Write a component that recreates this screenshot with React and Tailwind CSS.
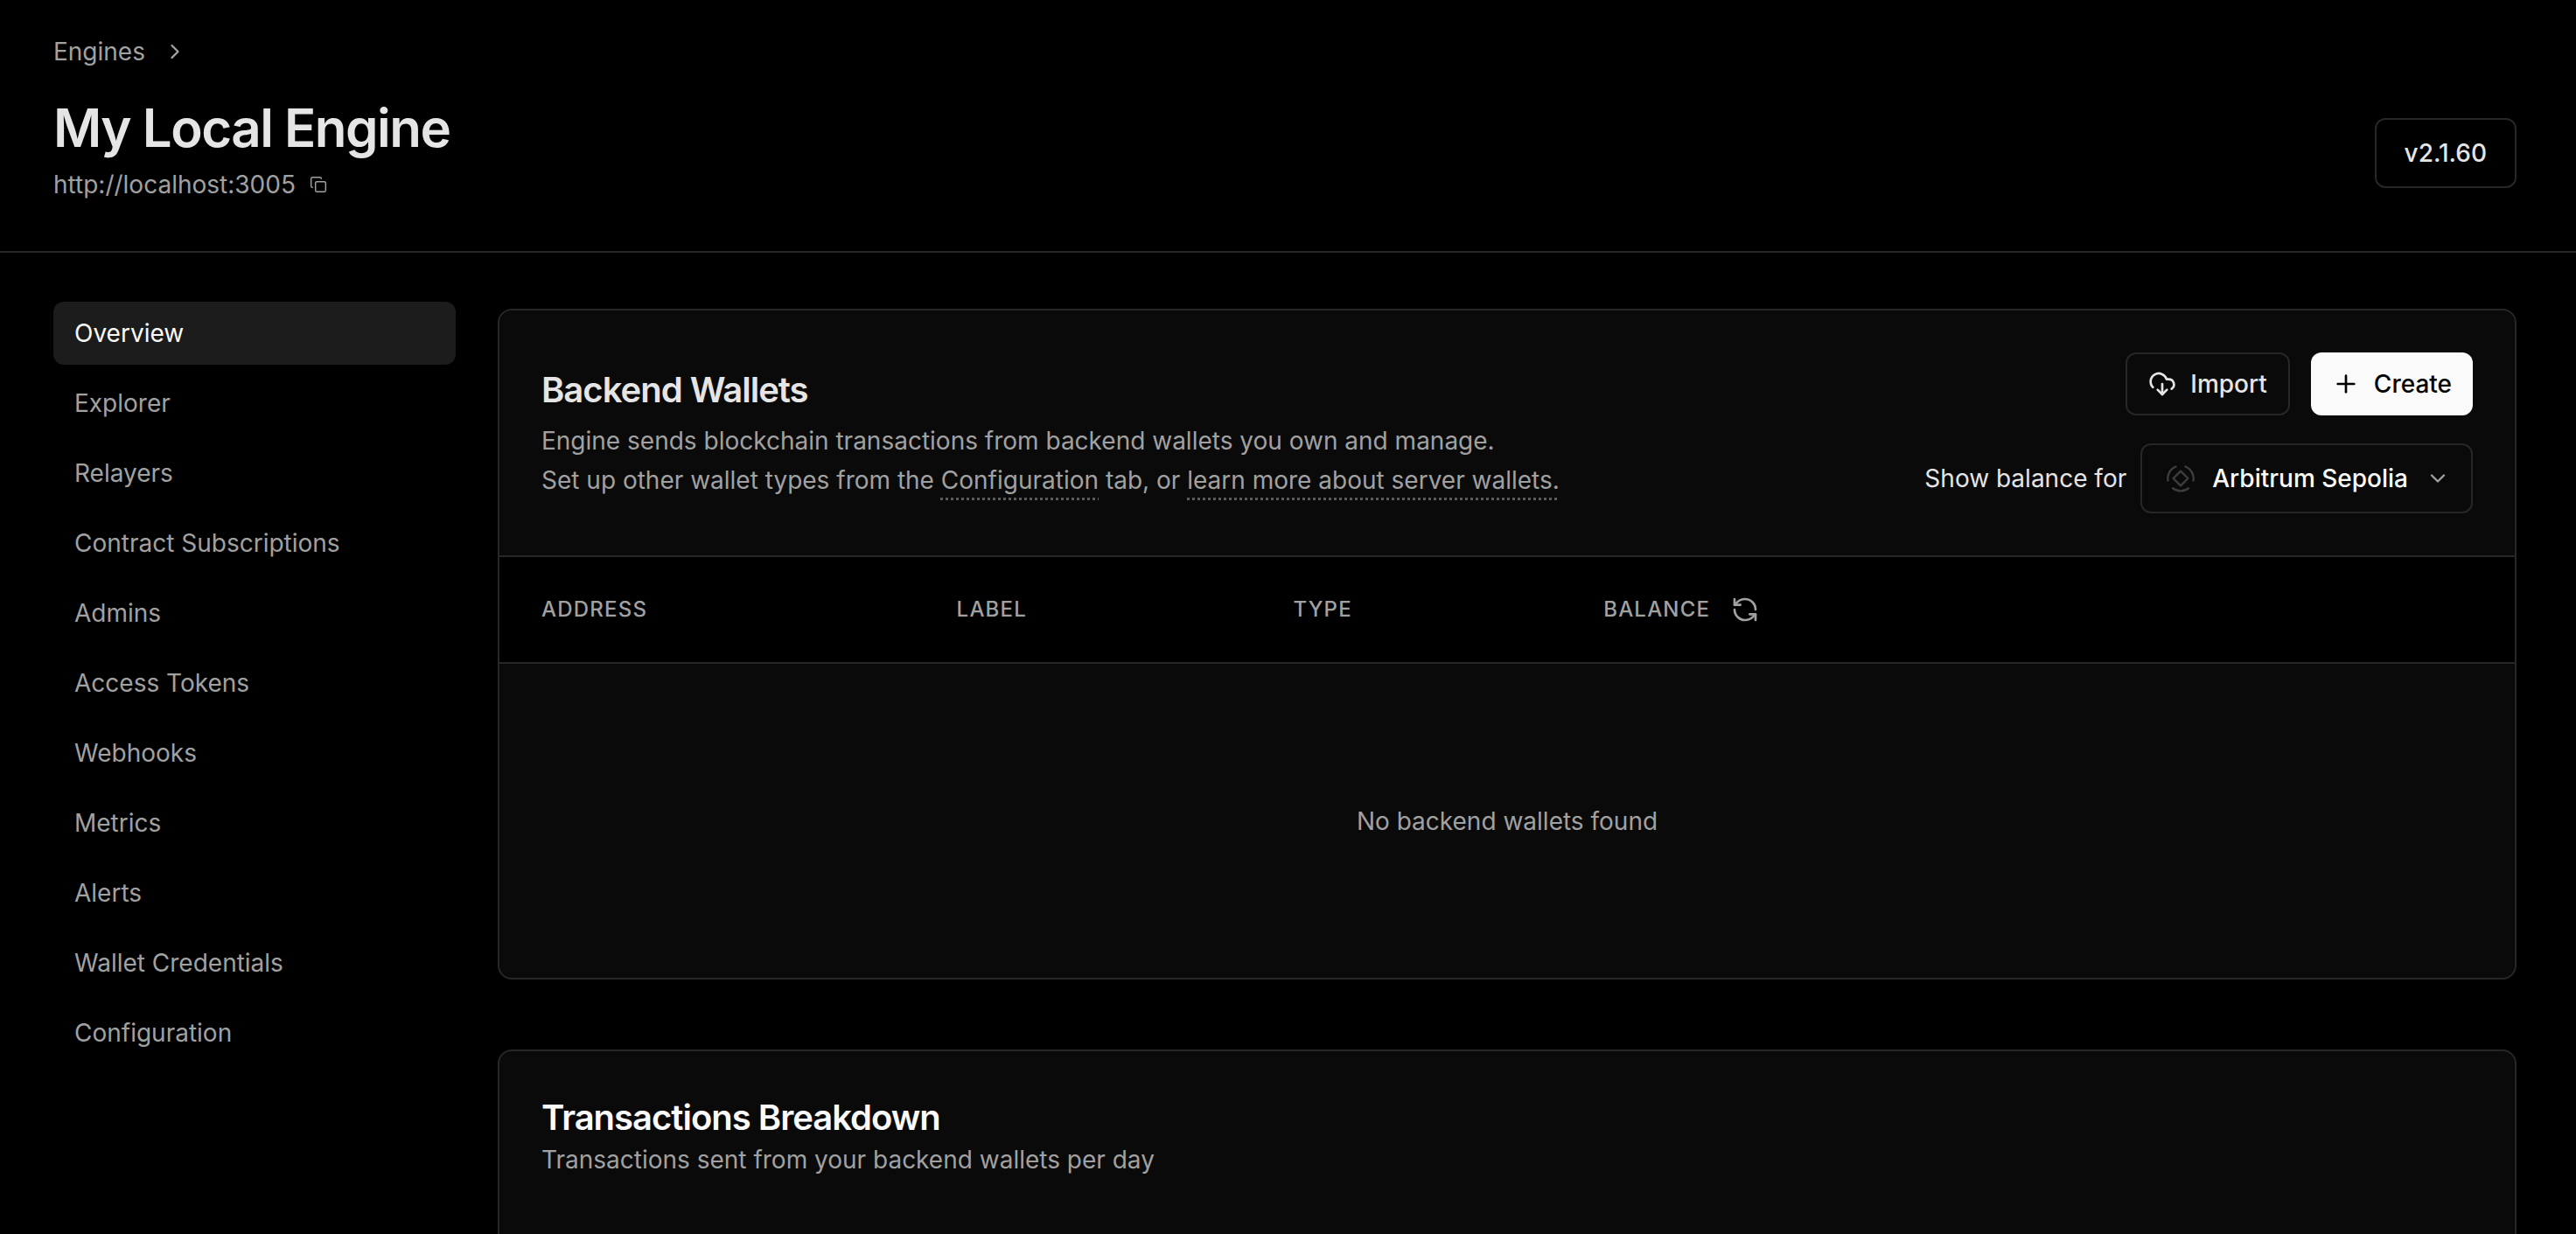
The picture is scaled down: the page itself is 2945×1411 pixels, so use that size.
import { ChevronRight, ChevronDown, Copy, Plus, RefreshCcw } from "lucide-react";

const NAV = [
  "Overview",
  "Explorer",
  "Relayers",
  "Contract Subscriptions",
  "Admins",
  "Access Tokens",
  "Webhooks",
  "Metrics",
  "Alerts",
  "Wallet Credentials",
  "Configuration",
];

function ImportIcon() {
  return (
    <svg viewBox="0 0 24 24" className="size-8" fill="none" stroke="currentColor" strokeWidth="2" strokeLinecap="round" strokeLinejoin="round" aria-hidden="true">
      <path d="M4 14.899A7 7 0 1 1 15.71 8h1.79a4.5 4.5 0 0 1 2.5 8.242" />
      <path d="M12 12v9" />
      <path d="m8 17 4 4 4-4" />
    </svg>
  );
}

function ChainIcon() {
  return (
    <svg viewBox="0 0 32 32" className="size-8" fill="none" stroke="#3d3d3d" strokeWidth="2.4" strokeLinecap="round" strokeLinejoin="round" aria-hidden="true">
      <path d="M16 7.600 24.400 16 16 24.400 7.600 16z" />
      <path d="M10.500 2.500A14.600 14.600 0 0 0 1.500 18.500" />
      <path d="M21.500 2.500A14.600 14.600 0 0 1 30.500 18.500" />
      <path d="M7 27.200a14.400 14.400 0 0 0 18 0" />
    </svg>
  );
}

function NavItem({ label, active }) {
  return (
    <a
      href="#"
      aria-current={active ? "page" : undefined}
      className={
        active
          ? "flex h-[72px] items-center rounded-xl bg-[#1c1c1c] px-6 text-[#fafafa]"
          : "flex h-[72px] items-center rounded-xl px-6"
      }
    >
      {label}
    </a>
  );
}

function InlineLink({ children }) {
  return (
    <a href="#" className="underline decoration-dotted decoration-[3px] decoration-[#5c5c5c] underline-offset-[10px]">
      {children}
    </a>
  );
}

export default function App() {
  return (
    <div className="h-screen overflow-hidden bg-black font-['Inter',sans-serif] text-[28px] leading-10 text-[#a1a1a1]">
      <header className="border-b-2 border-[#272727] pr-[68px] pl-[61px]">
        <nav aria-label="Breadcrumb" className="flex h-[104px] items-center gap-5 pt-3.5">
          <a href="#">Engines</a>
          <ChevronRight className="size-7" aria-hidden="true" />
        </nav>
        <div className="flex items-center justify-between pb-[41px]">
          <div className="pb-3">
            <h1 className="text-[60px] leading-[84px] font-semibold tracking-tight text-[#e5e5e5]">My Local Engine</h1>
            <div className="flex h-[46px] items-center gap-4">
              <span>http://localhost:3005</span>
              <button type="button" aria-label="Copy URL">
                <Copy className="size-5" strokeWidth={1.75} />
              </button>
            </div>
          </div>
          <button type="button" className="h-20 rounded-xl border-2 border-[#272727] px-8 font-medium text-[#e5e5e5]">
            v2.1.60
          </button>
        </div>
      </header>

      <div className="flex gap-12 pt-14 pr-[68px] pl-[61px]">
        <nav aria-label="Engine" className="flex w-[460px] shrink-0 flex-col gap-2">
          {NAV.map((label, i) => (
            <NavItem key={label} label={label} active={i === 0} />
          ))}
        </nav>

        <main className="flex min-w-0 flex-1 flex-col gap-20 pt-2">
          <section className="overflow-hidden rounded-2xl border-2 border-[#272727] bg-[#0a0a0a]">
            <div className="flex items-center justify-between p-12">
              <div>
                <h2 className="text-[40px] leading-14 font-semibold tracking-tight text-[#e5e5e5]">Backend Wallets</h2>
                <p className="pt-2 leading-[45px]">
                  Engine sends blockchain transactions from backend wallets you own and manage.
                  <br />
                  Set up other wallet types from the <InlineLink>Configuration</InlineLink> tab, or{" "}
                  <InlineLink>learn more about server wallets.</InlineLink>
                </p>
              </div>
              <div className="flex flex-col items-end gap-8">
                <div className="flex gap-6 font-medium">
                  <button type="button" className="flex h-[72px] items-center gap-4 rounded-xl border-2 border-[#272727] px-6 text-[#e5e5e5]">
                    <ImportIcon />
                    Import
                  </button>
                  <button type="button" className="flex h-[72px] items-center gap-4 rounded-xl bg-[#fafafa] px-6 text-black">
                    <Plus className="size-8" />
                    Create
                  </button>
                </div>
                <div className="flex items-center gap-4 text-[#e5e5e5]">
                  <label htmlFor="chain">Show balance for</label>
                  <div className="flex h-20 items-center gap-5 rounded-xl border-2 border-[#272727] pr-6 pl-7">
                    <ChainIcon />
                    <select id="chain" className="field-sizing-content appearance-none bg-transparent font-medium text-[#fafafa] outline-none">
                      <option>Arbitrum Sepolia</option>
                    </select>
                    <ChevronDown className="size-7 text-[#a1a1a1]" aria-hidden="true" />
                  </div>
                </div>
              </div>
            </div>

            <table className="w-full table-fixed text-left">
              <colgroup>
                <col className="w-[20.6%]" />
                <col className="w-[16.7%]" />
                <col className="w-[15.4%]" />
                <col />
              </colgroup>
              <thead className="border-y-2 border-[#272727] bg-black text-2xl tracking-wider">
                <tr className="h-[122px]">
                  <th className="px-12 font-medium">ADDRESS</th>
                  <th className="px-12 font-medium">LABEL</th>
                  <th className="px-12 font-medium">TYPE</th>
                  <th className="px-12 font-medium">
                    <div className="flex items-center gap-6">
                      BALANCE
                      <button type="button" aria-label="Refresh balances">
                        <RefreshCcw className="size-8" />
                      </button>
                    </div>
                  </th>
                </tr>
              </thead>
              <tbody>
                <tr>
                  <td colSpan={4} className="h-[360px] text-center">
                    No backend wallets found
                  </td>
                </tr>
              </tbody>
            </table>
          </section>

          <section className="h-[480px] rounded-2xl border-2 border-[#272727] bg-[#0a0a0a] p-12">
            <h2 className="text-[40px] leading-14 font-semibold tracking-tight text-[#fafafa]">Transactions Breakdown</h2>
            <p>Transactions sent from your backend wallets per day</p>
          </section>
        </main>
      </div>
    </div>
  );
}
